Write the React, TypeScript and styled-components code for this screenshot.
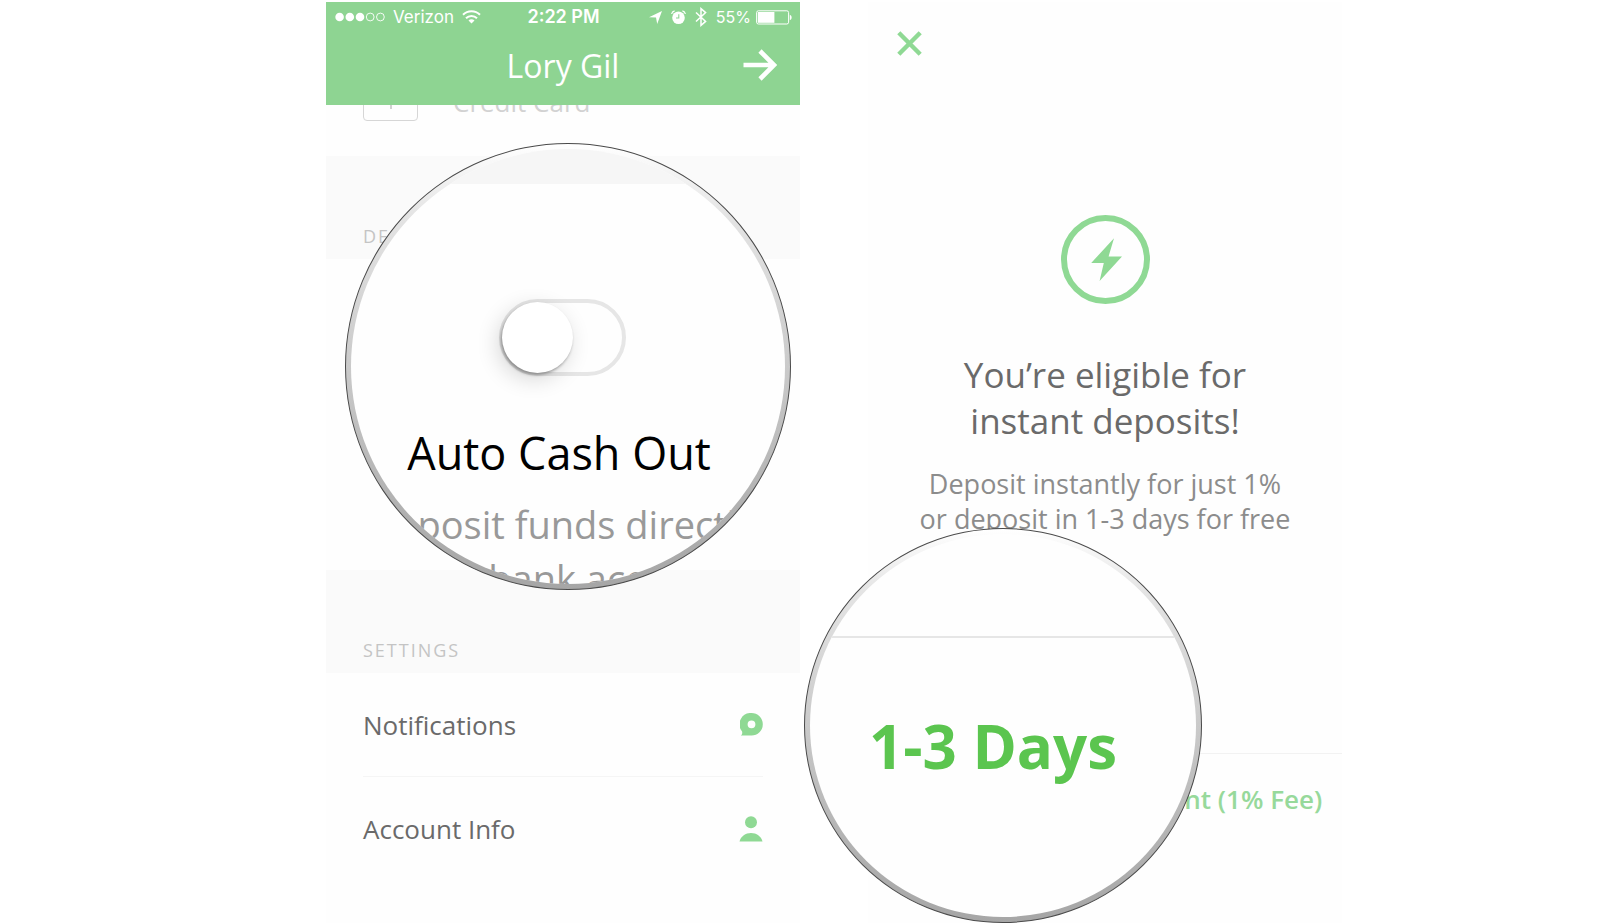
import React from 'react';
import styled, { createGlobalStyle } from 'styled-components';

const green = '#8ed492';
const iconGreen = '#8fd994';

const GlobalStyle = createGlobalStyle`
  *, *::before, *::after { box-sizing: border-box; }
  body {
    margin: 0;
    background: #fff;
    font-family: "Open Sans", "Noto Sans", sans-serif;
    color: #6a6a6a;
  }
  button, input { font: inherit; color: inherit; }
  h1, h2, h3, p { margin: 0; font-weight: 400; }
`;

const Page = styled.main`
  display: grid;
  grid-template-columns: minmax(0, 474px) minmax(0, 474px);
  justify-content: center;
  column-gap: 68px;
  min-height: 100vh;
  padding: 2px 0 0 68px;
  overflow: hidden;
`;

const Screen = styled.section`
  position: relative;
  display: flex;
  flex-direction: column;
  background: #fefefe;
`;

const Header = styled.header`
  position: relative;
  background: ${green};
  color: #fff;
`;

const StatusBar = styled.div`
  display: grid;
  grid-template-columns: 1fr auto 1fr;
  align-items: center;
  height: 30px;
  padding: 0 8px 0 9px;
  font-family: Inter, sans-serif;
  font-size: 17px;
  line-height: 24px;
`;

const StatusGroup = styled.div<{ $end?: boolean; $gap: number }>`
  display: flex;
  align-items: center;
  justify-content: ${(p) => (p.$end ? 'flex-end' : 'flex-start')};
  gap: ${(p) => p.$gap}px;
`;

const Clock = styled.span`
  font-size: 18px;
  font-weight: 600;
`;

const Percent = styled.span`
  font-size: 16px;
`;

const TitleBar = styled.div`
  display: grid;
  grid-template-columns: 1fr auto 1fr;
  align-items: center;
  height: 73px;
  padding: 0 23px 8px;
`;

const Title = styled.h1`
  grid-column: 2;
  padding-top: 2px;
  font-size: 32px;
  line-height: 44px;
`;

const IconButton = styled.button`
  display: flex;
  justify-self: end;
  align-self: flex-start;
  padding: 0;
  border: 0;
  background: none;
  cursor: pointer;
`;

const ArrowButton = styled(IconButton)`
  align-self: center;
`;

const List = styled.div`
  flex: 1;
  overflow: hidden;
`;

const CardRow = styled.div`
  display: flex;
  align-items: center;
  gap: 35px;
  height: 106px;
  margin-top: -55px;
  padding: 0 37px 3px;
  font-size: 26px;
  line-height: 36px;
  color: #d2d2d2;
`;

const CardBox = styled.span`
  display: flex;
  align-items: center;
  justify-content: center;
  width: 55px;
  height: 39px;
  border: 1px solid #d6d6d6;
  border-radius: 4px;
`;

const Band = styled.h2`
  display: flex;
  align-items: flex-end;
  height: 103px;
  padding: 0 37px 11px;
  background: #fafafa;
  font-size: 18px;
  line-height: 24px;
  letter-spacing: 2px;
  color: #c4c4c4;
`;

const DepositArea = styled.div`
  height: 311px;
`;

const Rows = styled.ul`
  margin: 0;
  padding: 0 37px;
  list-style: none;
`;

const Row = styled.li`
  & + & {
    border-top: 1px solid #f5f5f5;
  }
`;

const RowButton = styled.button`
  display: flex;
  align-items: center;
  justify-content: space-between;
  width: 100%;
  height: 103px;
  padding: 0;
  border: 0;
  background: none;
  font-size: 26px;
  line-height: 36px;
  cursor: pointer;
`;

const Lens = styled.div<{ $left: number; $top: number; $width: number; $height: number }>`
  position: absolute;
  left: ${(p) => p.$left}px;
  top: ${(p) => p.$top}px;
  width: ${(p) => p.$width}px;
  height: ${(p) => p.$height}px;
  padding: 5px;
  border: 1px solid #4a4a4a;
  border-radius: 50%;
  background: linear-gradient(#fff 0%, #e4e4e4 16%, #cacaca 50%, #b2b2b2 80%, #a6a6a6 100%);
`;

const Glass = styled.div`
  display: flex;
  flex-direction: column;
  align-items: center;
  height: 100%;
  padding-right: 12px;
  border-radius: 50%;
  overflow: hidden;
  background: #fefefe;
`;

const GlassBand = styled.div`
  flex: none;
  align-self: stretch;
  height: 35px;
  margin-right: -12px;
  background: #f6f6f6;
`;

const Switch = styled.input`
  appearance: none;
  flex: none;
  width: 127px;
  height: 77px;
  margin: 115px 0 0;
  padding: 0;
  border: 4px solid #e6e6e6;
  border-radius: 39px;
  background: #fefefe;
  cursor: pointer;

  &::before {
    content: '';
    display: block;
    width: 71px;
    height: 71px;
    margin: -1px;
    border-radius: 50%;
    background: #fff;
    box-shadow: -1px 2px 3px rgba(0, 0, 0, 0.32), -4px 6px 22px rgba(0, 0, 0, 0.16);
  }
  &:checked { background: ${green}; }
  &:checked::before { margin-left: 49px; }
`;

const SwitchLabel = styled.label`
  flex: none;
  margin: 47px 6px 0 0;
  font-size: 45px;
  line-height: 60px;
  color: #000;
`;

const SwitchHint = styled.p`
  flex: none;
  margin-top: 14px;
  font-size: 38px;
  line-height: 54px;
  text-align: center;
  white-space: nowrap;
  color: #999;
`;

const GlassRule = styled.hr`
  flex: none;
  align-self: stretch;
  height: 2px;
  margin: 102px -12px 0 0;
  border: 0;
  background: #e6e6e6;
`;

const DaysButton = styled.button`
  margin: 68px 8px 0 0;
  padding: 0;
  border: 0;
  background: none;
  font-size: 60px;
  font-weight: 700;
  line-height: 80px;
  color: #5bc54f;
  cursor: pointer;
`;

const CloseButton = styled(IconButton)`
  margin: 29px 0 0 29px;
`;

const Offer = styled.div`
  display: flex;
  flex-direction: column;
  align-items: center;
  margin-top: 159px;
  text-align: center;
`;

const OfferTitle = styled.h2`
  margin-top: 48px;
  font-size: 35px;
  line-height: 46px;
`;

const OfferText = styled.p`
  margin-top: 22px;
  font-size: 27px;
  line-height: 35px;
  color: #8c8c8c;
`;

const Actions = styled.div`
  display: flex;
  justify-content: flex-end;
  margin-top: 217px;
  border-top: 1px solid #f2f2f2;
`;

const ActionButton = styled.button`
  width: 50%;
  height: 90px;
  padding: 0 3px 0 0;
  border: 0;
  background: none;
  font-size: 26px;
  font-weight: 600;
  line-height: 36px;
  white-space: nowrap;
  color: #97d99b;
  cursor: pointer;
`;

const SignalDots = () => (
  <svg width="50" height="10" viewBox="0 0 50 10" aria-label="Signal">
    {[0, 1, 2, 3, 4].map((i) => (
      <circle
        key={i}
        cx={4.6 + i * 10.2}
        cy="5"
        r={i < 3 ? 4.3 : 3.9}
        fill={i < 3 ? '#fff' : 'none'}
        stroke="#fff"
        strokeWidth={i < 3 ? 0 : 0.9}
      />
    ))}
  </svg>
);

const Wifi = () => (
  <svg width="19" height="14" viewBox="0 0 19 14" fill="none" stroke="#fff" strokeWidth="2">
    <path d="M1 4.800a12 12 0 0 1 17 0" />
    <path d="M4 8.200a7.700 7.700 0 0 1 11 0" />
    <path d="M9.500 13.600 6.500 10.600a4.200 4.200 0 0 1 6 0z" fill="#fff" stroke="none" />
  </svg>
);

const Location = () => (
  <svg width="13" height="13" viewBox="0 0 13 13">
    <path d="M13 0 8.200 13 7 6.600 0 6.200z" fill="#fff" />
  </svg>
);

const Alarm = () => (
  <svg width="15" height="15" viewBox="0 0 15 15" fill="none">
    <circle cx="7.5" cy="7.7" r="6.3" fill="#fff" />
    <path d="M.6 4A4 4 0 0 1 3.600 .8M14.4 4A4 4 0 0 0 11.400 .8" stroke="#fff" strokeWidth="1.2" />
    <path d="M7.8 4.2v3.8H5" stroke={green} strokeWidth="1.1" />
  </svg>
);

const Bluetooth = () => (
  <svg width="12" height="20" viewBox="0 0 12 20" fill="none" stroke="#fff" strokeWidth="1.5">
    <path d="M1 5.5 10.6 14.4 6 18.4V1.6l4.6 4L1 14.5" />
  </svg>
);

const Battery = () => (
  <svg width="36" height="15" viewBox="0 0 36 15" fill="none">
    <rect x=".6" y=".8" width="32" height="13.2" rx="1.8" stroke="#fff" />
    <rect x="1.8" y="2" width="16.6" height="10.8" fill="#fff" />
    <path d="M33.8 4.8c2.4.6 2.4 4.8 0 5.4z" fill="#fff" />
  </svg>
);

const Arrow = () => (
  <svg width="34" height="32" viewBox="0 0 34 32" fill="none" stroke="#fff" strokeWidth="4.6">
    <path d="M.5 16H31M17 2l14 14-14 14" />
  </svg>
);

const Plus = () => (
  <svg width="14" height="14" viewBox="0 0 14 14" stroke="#d2d2d2" strokeWidth="2">
    <path d="M7 0v14M0 7h14" />
  </svg>
);

const Bubble = () => (
  <svg width="23" height="23" viewBox="0 0 23 23">
    <path
      fillRule="evenodd"
      fill={iconGreen}
      d="M11.5 0a11.3 11.3 0 0 1 0 22.6H.8c1.2-.9 1.7-2.1 1.3-4.1A11.3 11.3 0 0 1 11.5 0zm0 7.4a3.9 3.9 0 1 0 0 7.8 3.9 3.9 0 0 0 0-7.8z"
    />
  </svg>
);

const Person = () => (
  <svg width="24" height="26" viewBox="0 0 24 26" fill={iconGreen}>
    <circle cx="12" cy="6.3" r="6" />
    <path d="M.5 25.5C2 20 6.500 17 12 17s10 3 11.500 8.500z" />
  </svg>
);

const Cross = () => (
  <svg width="25" height="25" viewBox="0 0 25 25" stroke={iconGreen} strokeWidth="4.400">
    <path d="M1.800 1.800 23.200 23.200M23.200 1.800 1.800 23.200" />
  </svg>
);

const Bolt = () => (
  <svg width="89" height="89" viewBox="0 0 89 89" fill="none">
    <circle cx="44.500" cy="44.500" r="41.500" stroke={iconGreen} strokeWidth="6" />
    <path d="M53 23.200 30.200 48h12.600L38.600 66 61 41.400H47.600z" fill={iconGreen} />
  </svg>
);

export default function App() {
  return (
    <>
      <GlobalStyle />
      <Page>
        <Screen>
          <Header>
            <StatusBar>
              <StatusGroup $gap={8}>
                <SignalDots />
                <span>Verizon</span>
                <Wifi />
              </StatusGroup>
              <Clock>2:22 PM</Clock>
              <StatusGroup $gap={9} $end>
                <Location />
                <Alarm />
                <Bluetooth />
                <StatusGroup $gap={5}>
                  <Percent>55%</Percent>
                  <Battery />
                </StatusGroup>
              </StatusGroup>
            </StatusBar>
            <TitleBar>
              <Title>Lory Gil</Title>
              <ArrowButton type="button" aria-label="Continue">
                <Arrow />
              </ArrowButton>
            </TitleBar>
          </Header>
          <List>
            <CardRow>
              <CardBox>
                <Plus />
              </CardBox>
              <span>Credit Card</span>
            </CardRow>
            <Band>DEPOSITS</Band>
            <DepositArea />
            <Band>SETTINGS</Band>
            <Rows>
              <Row>
                <RowButton type="button">
                  Notifications
                  <Bubble />
                </RowButton>
              </Row>
              <Row>
                <RowButton type="button">
                  Account Info
                  <Person />
                </RowButton>
              </Row>
            </Rows>
          </List>
          <Lens $left={19} $top={141} $width={446} $height={447}>
            <Glass>
              <GlassBand />
              <Switch type="checkbox" id="auto-cash-out" />
              <SwitchLabel htmlFor="auto-cash-out">Auto Cash Out</SwitchLabel>
              <SwitchHint>
                Deposit funds directly
                <br />
                your bank account
              </SwitchHint>
            </Glass>
          </Lens>
        </Screen>
        <Screen>
          <CloseButton type="button" aria-label="Close">
            <Cross />
          </CloseButton>
          <Offer>
            <Bolt />
            <OfferTitle>
              You’re eligible for
              <br />
              instant deposits!
            </OfferTitle>
            <OfferText>
              Deposit instantly for just 1%
              <br />
              or deposit in 1-3 days for free
            </OfferText>
          </Offer>
          <Actions>
            <ActionButton type="button">Instant (1% Fee)</ActionButton>
          </Actions>
          <Lens $left={-64} $top={526} $width={398} $height={395}>
            <Glass>
              <GlassRule />
              <DaysButton type="button">1-3 Days</DaysButton>
            </Glass>
          </Lens>
        </Screen>
      </Page>
    </>
  );
}
